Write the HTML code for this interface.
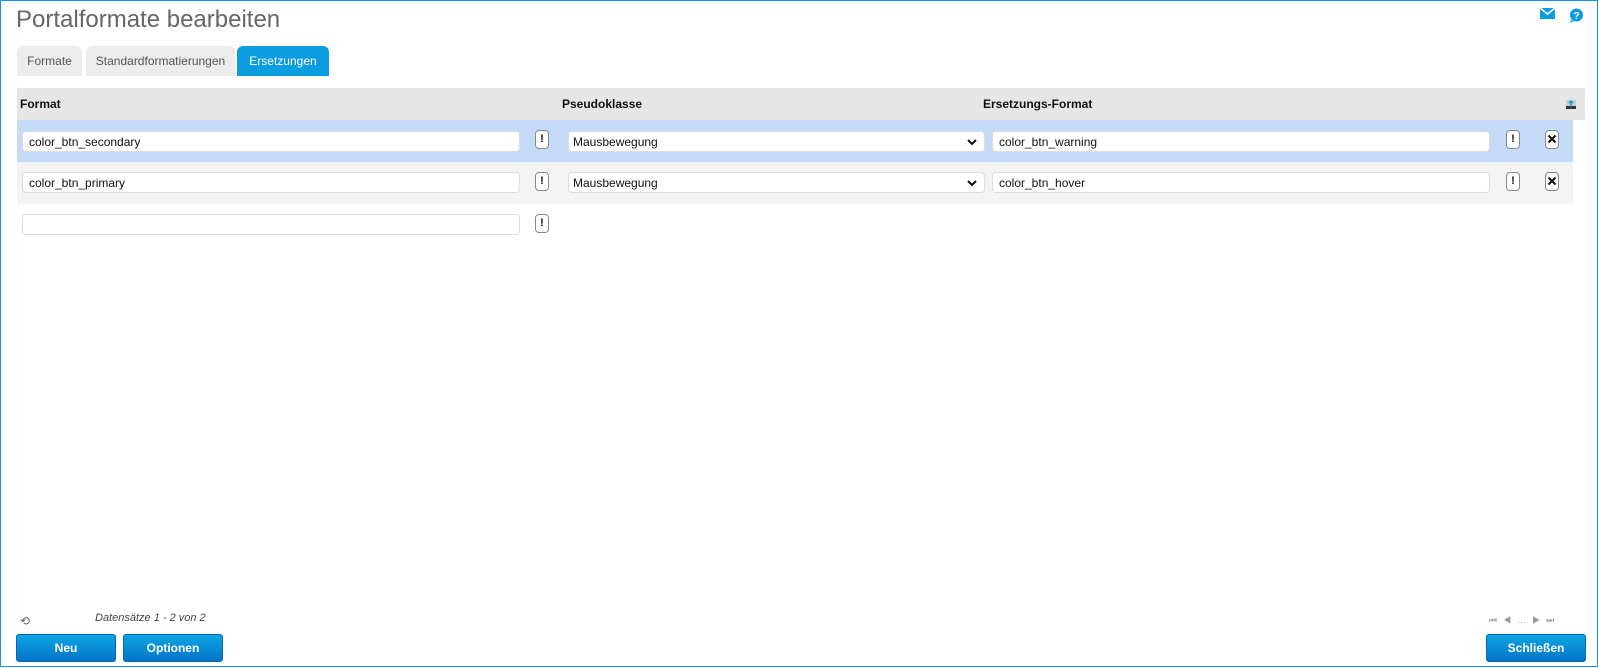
<!DOCTYPE html>
<html><head><meta charset="utf-8"><style>
*{box-sizing:border-box}
body{margin:0;width:1599px;height:668px;overflow:hidden;font-family:"Liberation Sans",Arial,sans-serif;background:#fff;position:relative}
.frame{position:absolute;left:0;top:0;width:1598px;height:667px;border:1px solid #1496dc}
.abs{position:absolute}
.title{left:16px;top:6px;font-size:24px;color:#666}
.tab{top:46px;height:30px;border-radius:6px 6px 0 0;background:#ececec;color:#555;font-size:12px;line-height:30px;text-align:center}
.tab.act{background:#0c9ce0;color:#fff}
.hdr{left:17px;top:88px;width:1568px;height:32px;background:#e6e6e6}
.hdr span{position:absolute;top:9px;font-size:12px;font-weight:bold;color:#111}
.row{left:17px;width:1556px;height:42px}
.inp{position:absolute;height:21px;background:#fff;border:1px solid #ddd;border-radius:4px;font-size:12px;line-height:20px;padding-left:6px;color:#111}
.ex{position:absolute;width:14px;height:19px;border:1px solid #888;border-radius:4px;background:#fff;font-size:11px;font-weight:bold;text-align:center;line-height:17px;color:#111}
.sel{position:absolute;height:21px;background:#fff;border:1px solid #ddd;border-radius:4px;font-size:12px;line-height:20px;padding-left:4px;color:#111}
.sel svg{position:absolute;right:7px;top:7px}
.btn{top:634px;height:28px;width:100px;border-radius:3px;background:linear-gradient(#0ba6e2,#0673c9);color:#fff;font-size:12px;font-weight:bold;text-align:center;line-height:27px;border:1px solid #0665b8}
</style></head><body>
<div class="frame"></div>
<div class="abs title">Portalformate bearbeiten</div>
<svg class="abs" style="left:1540px;top:8px" width="15" height="11" viewBox="0 0 15 11"><rect width="15" height="11" fill="#0c9ce0"/><path d="M0 0 L7.5 6 L15 0" stroke="#fff" stroke-width="1.5" fill="none"/></svg>
<svg class="abs" style="left:1569px;top:8px" width="15" height="15" viewBox="0 0 15 15"><circle cx="7.5" cy="7" r="6.5" fill="#0c9ce0"/><path d="M2 12 L1 15 L5 13Z" fill="#0c9ce0"/><text x="7.5" y="11" font-size="10" font-weight="bold" fill="#fff" text-anchor="middle" font-family="Liberation Sans">?</text></svg>
<div class="abs tab" style="left:17px;width:65px">Formate</div>
<div class="abs tab" style="left:86px;width:149px">Standardformatierungen</div>
<div class="abs tab act" style="left:237px;width:92px">Ersetzungen</div>
<div class="abs hdr"><span style="left:3px">Format</span><span style="left:545px">Pseudoklasse</span><span style="left:966px">Ersetzungs-Format</span>
<svg style="position:absolute;left:1549px;top:12px" width="10" height="9"><rect width="10" height="9" fill="#ccc"/><rect y="6" width="10" height="3" fill="#333"/><path d="M5 1V7M3 3L5 1L7 3" stroke="#0c9ce0" stroke-width="1.5" fill="none"/></svg></div>
<div class="abs row" style="top:120px;background:#c5daf7">
<div class="inp" style="left:5px;top:11px;width:498px">color_btn_secondary</div>
<div class="ex" style="left:518px;top:10px">!</div>
<div class="sel" style="left:551px;top:11px;width:417px">Mausbewegung<svg width="10" height="7"><path d="M1 1L5 5L9 1" stroke="#111" stroke-width="2" fill="none"/></svg></div>
<div class="inp" style="left:975px;top:11px;width:498px">color_btn_warning</div>
<div class="ex" style="left:1489px;top:10px">!</div>
<div class="ex" style="left:1528px;top:10px"><svg width="10" height="10" style="margin-top:3px"><path d="M1.5 1.5L8.5 8.5M8.5 1.5L1.5 8.5" stroke="#111" stroke-width="2"/></svg></div>
</div>
<div class="abs row" style="top:162px;background:#f3f3f3">
<div class="inp" style="left:5px;top:10px;width:498px">color_btn_primary</div>
<div class="ex" style="left:518px;top:10px">!</div>
<div class="sel" style="left:551px;top:10px;width:417px">Mausbewegung<svg width="10" height="7"><path d="M1 1L5 5L9 1" stroke="#111" stroke-width="2" fill="none"/></svg></div>
<div class="inp" style="left:975px;top:10px;width:498px">color_btn_hover</div>
<div class="ex" style="left:1489px;top:10px">!</div>
<div class="ex" style="left:1528px;top:10px"><svg width="10" height="10" style="margin-top:3px"><path d="M1.5 1.5L8.5 8.5M8.5 1.5L1.5 8.5" stroke="#111" stroke-width="2"/></svg></div>
</div>
<div class="inp abs" style="left:22px;top:214px;width:498px"></div>
<div class="ex abs" style="left:535px;top:214px">!</div>
<div class="abs" style="left:20px;top:614px;font-size:12px;color:#666">⟲</div>
<div class="abs" style="left:95px;top:612px;font-size:11px;font-style:italic;color:#444">Datensätze 1 - 2 von 2</div>
<div class="abs" style="left:1489px;top:615px;font-size:9px;color:#999;letter-spacing:6px">⏮◀…▶⏭</div>
<div class="abs btn" style="left:16px">Neu</div>
<div class="abs btn" style="left:123px">Optionen</div>
<div class="abs btn" style="left:1486px">Schließen</div>
</body></html>
